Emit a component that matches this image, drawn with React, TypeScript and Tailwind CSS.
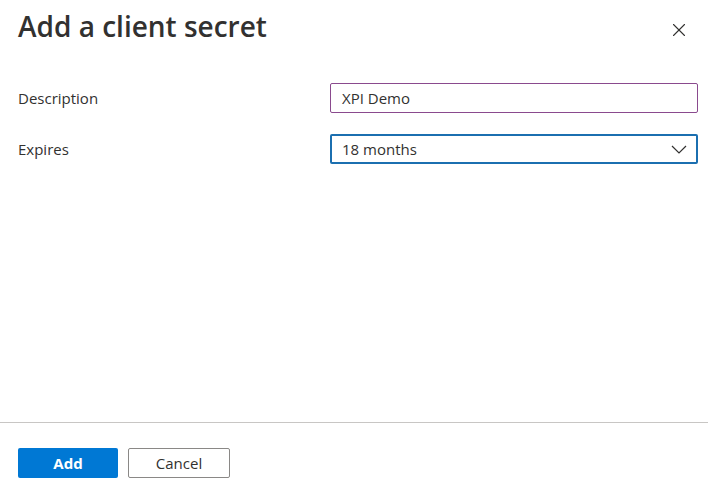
import { X } from "lucide-react";

export default function App() {
  return (
    <div
      className="w-[708px] h-[492px] bg-white flex flex-col text-[#323130]"
      style={{ fontFamily: '"Open Sans", "Noto Sans", sans-serif' }}
    >
      {/* Header */}
      <div className="flex items-start justify-between pl-[18px] pr-[18px] pt-[8px]">
        <h1 className="text-[28px] leading-[36px] font-semibold">Add a client secret</h1>
        <button className="mt-[11px] text-[#323130]">
          <X className="w-[22px] h-[22px]" strokeWidth={1.2} />
        </button>
      </div>

      {/* Form */}
      <div className="flex flex-col gap-[21px] pl-[18px] pr-[10px] pt-[39px]">
        <div className="flex items-center">
          <label className="w-[312px] text-[15px]">Description</label>
          <div className="flex-1 h-[30px] border border-[#8a4a8e] rounded-[2px] flex items-center px-[11px] text-[15px]">
            XPI Demo
          </div>
        </div>
        <div className="flex items-center">
          <label className="w-[312px] text-[15px]">Expires</label>
          <div className="flex-1 h-[30px] border-2 border-[#1b6fb0] rounded-[2px] flex items-center justify-between pl-[10px] pr-[9px] text-[15px]">
            <span>18 months</span>
            <svg width="16" height="9" viewBox="0 0 16 9" fill="none" stroke="#323130" strokeWidth="1.2">
              <path d="M1 1l7 7 7-7" />
            </svg>
          </div>
        </div>
      </div>

      <div className="flex-1" />

      {/* Footer */}
      <div className="border-t border-[#c8c6c4] pt-[25px] pb-[14px] pl-[18px] flex gap-[10px]">
        <button className="w-[100px] h-[30px] bg-[#0078d4] rounded-[2px] text-white text-[15px] font-bold">
          Add
        </button>
        <button className="w-[102px] h-[30px] border border-[#8a8886] rounded-[2px] text-[15px] text-[#323130]">
          Cancel
        </button>
      </div>
    </div>
  );
}
